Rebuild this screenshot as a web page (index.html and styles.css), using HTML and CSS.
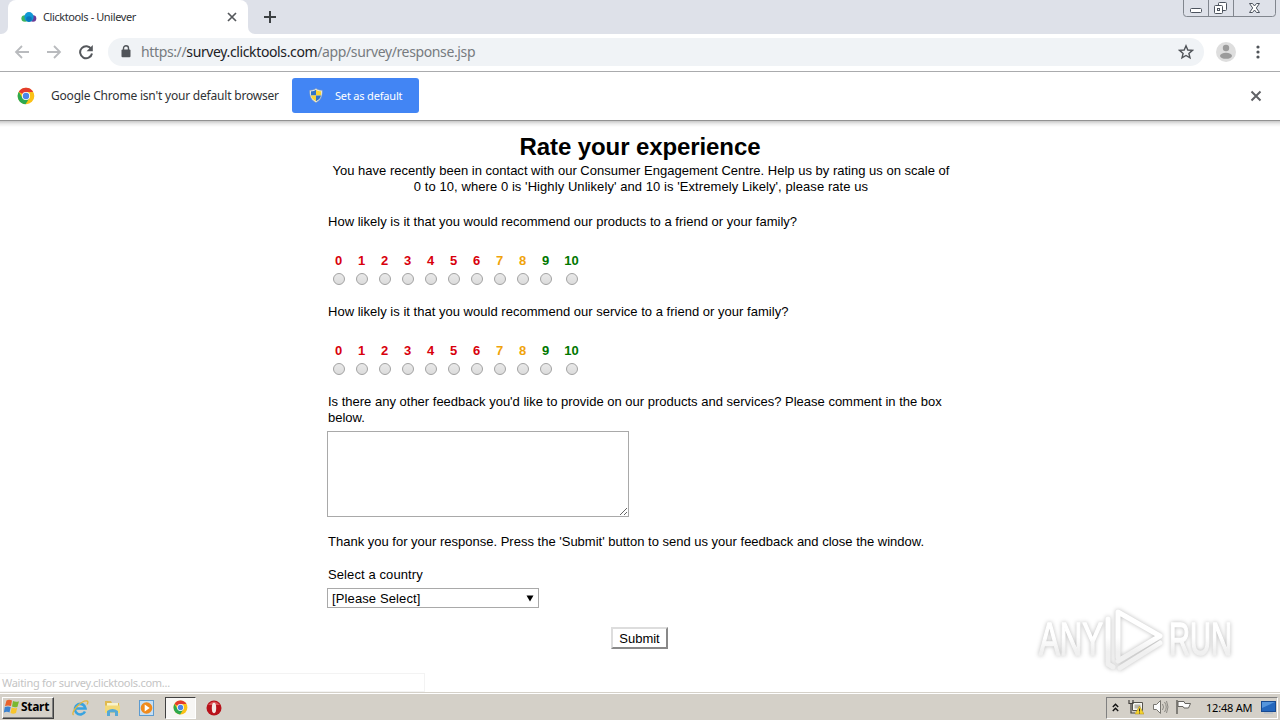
FILE: index.html
```
<!DOCTYPE html>
<html lang="en">
<head>
  <meta charset="UTF-8">
  <title>Clicktools - Unilever</title>
  <link rel="stylesheet" href="styles.css">
</head>
<body>
  <svg class="defs" width="0" height="0">
    <symbol id="chrome" viewBox="0 0 18 18">
      <circle cx="9" cy="9" r="8.3" fill="#fbc116"/>
      <path d="M9 9 1.8 4.8A8.3 8.3 0 0 1 16.2 4.9H9z" fill="#e33b2e"/>
      <path d="M1.8 4.8A8.3 8.3 0 0 0 8.5 17.3L12.5 11 9 9 5.5 11z" fill="#2da94f"/>
      <circle cx="9" cy="9" r="4.1" fill="#fff"/>
      <circle cx="9" cy="9" r="3.2" fill="#4a86e8"/>
    </symbol>
  </svg>

  <!-- tabs -->
  <div class="tab-strip">
    <div class="tab-before"></div>
    <div class="tab">
      <svg class="favicon" width="16" height="12" viewBox="0 0 16 12">
        <ellipse cx="4" cy="7.5" rx="3.6" ry="3.3" fill="#3fb55d"/>
        <ellipse cx="12" cy="7.5" rx="3.3" ry="3.3" fill="#6b3c97"/>
        <ellipse cx="8" cy="6" rx="4.6" ry="4.9" fill="#1097d5"/>
        <ellipse cx="8" cy="8" rx="2.8" ry="2.8" fill="#0878bd"/>
      </svg>
      <span class="tab-title">Clicktools - Unilever</span>
      <svg class="tab-close" width="10" height="10" viewBox="0 0 10 10"><path d="M1 1l8 8M9 1L1 9" stroke="#55585c" stroke-width="1.7"/></svg>
    </div>
    <div class="tab-after">
      <svg width="12" height="12" viewBox="0 0 12 12"><path d="M6 0v12M0 6h12" stroke="#3c4043" stroke-width="2"/></svg>
    </div>
    <div class="window-buttons">
      <svg width="94" height="18" viewBox="0 0 94 18" fill="none">
        <path d="M.5 0v13.500q0 3 3 3h86q3 0 3-3V0M25.500 0v16M50.500 0v16" stroke="#81868e"/>
        <rect x="7.500" y="8.500" width="11" height="4" rx="1" fill="#fff" stroke="#4c535e"/>
        <rect x="35.500" y="2.500" width="8" height="8" rx="1" fill="#fff" stroke="#4c535e"/>
        <rect x="31.500" y="5.500" width="8" height="8" rx="1" fill="#fff" stroke="#4c535e"/>
        <rect x="34.500" y="8.500" width="2" height="2" stroke="#4c535e"/>
        <path d="M66.500 3.500h3l2 2.500 2-2.500h3L73.300 8l3.200 4.500h-3l-2-2.500-2 2.500h-3L69.700 8z" fill="#fff" stroke="#4c535e"/>
      </svg>
    </div>
  </div>

  <!-- address bar -->
  <div class="toolbar">
    <svg class="nav back" width="16" height="16" viewBox="0 0 16 16"><path d="M15 8H2M8 2L2 8l6 6" fill="none" stroke="#b9bbbe" stroke-width="1.8"/></svg>
    <svg class="nav forward" width="16" height="16" viewBox="0 0 16 16"><path d="M1 8h13M8 2l6 6-6 6" fill="none" stroke="#b9bbbe" stroke-width="1.800"/></svg>
    <svg class="nav reload" width="16" height="16" viewBox="0 0 16 16"><path d="M13.300 5.200A6 6 0 1 0 14 9.500" fill="none" stroke="#55585c" stroke-width="2"/><path d="M14.800 1v6.200H8.600z" fill="#55585c"/></svg>
    <div class="omnibox">
      <svg width="10" height="13" viewBox="0 0 10 13"><rect x="0.500" y="4.500" width="9" height="7.800" rx="1" fill="#505459"/><path d="M2.500 5V3.200a2.500 2.500 0 0 1 5 0V5" fill="none" stroke="#505459" stroke-width="1.400"/></svg>
      <span class="url">https://<b>survey.clicktools.com</b>/app/survey/response.jsp</span>
      <svg class="star" width="16" height="16" viewBox="0 0 16 16"><path d="M8 1.800l1.800 4.200 4.600.4-3.500 3 1.100 4.500L8 11.500l-4 2.400 1.100-4.500-3.500-3 4.600-.4z" fill="none" stroke="#505459" stroke-width="1.400"/></svg>
    </div>
    <svg class="avatar" width="20" height="20" viewBox="0 0 20 20"><circle cx="10" cy="10" r="10" fill="#dedede"/><circle cx="10" cy="6" r="3.200" fill="#9b9b9b"/><ellipse cx="10" cy="13.800" rx="6" ry="3" fill="#9b9b9b"/></svg>
    <svg class="menu" width="4" height="14" viewBox="0 0 4 14" fill="#505459"><circle cx="2" cy="2" r="1.600"/><circle cx="2" cy="7" r="1.600"/><circle cx="2" cy="12" r="1.600"/></svg>
  </div>

  <div class="infobar">
    <svg class="chrome-logo" width="18" height="18"><use href="#chrome"/></svg>
    <span class="infobar-text">Google Chrome isn't your default browser</span>
    <div class="default-button">
      <svg width="14" height="15" viewBox="0 0 14 15">
        <path d="M7 .5C5 2 3 2.300.8 2.300c-.3 6 1.500 10 6.200 12.200 4.700-2.200 6.500-6.200 6.200-12.200C11 2.300 9 2 7 .5z" fill="#f3f3e8" stroke="#8f9eb0" stroke-width=".6"/>
        <path d="M7 1.800C5.300 3 3.700 3.300 2 3.300V7.500h5z" fill="#2f73c9"/><path d="M7 1.800c1.700 1.200 3.300 1.500 5 1.500V7.500H7z" fill="#f8d436"/>
        <path d="M2 7.500h5v5.800C4 11.800 2.400 10 2 7.500z" fill="#f8d436"/><path d="M12 7.500H7v5.800c3-1.500 4.600-3.300 5-5.800z" fill="#2f73c9"/>
      </svg>
      <span>Set as default</span>
    </div>
    <svg class="infobar-close" width="12" height="12" viewBox="0 0 12 12"><path d="M1.500 1.500l9 9M10.500 1.500l-9 9" stroke="#606266" stroke-width="2"/></svg>
  </div>

  <main class="page">
    <form class="survey">
      <h1>Rate your experience</h1>
      <p class="intro"><span class="intro-first">You have recently been in contact with our Consumer Engagement Centre. Help us by rating us on scale of</span><br><span class="intro-second">0 to 10, where 0 is 'Highly Unlikely' and 10 is 'Extremely Likely', please rate us</span></p>

      <p class="question rating">How likely is it that you would recommend our products to a friend or your family?</p>
      <div class="scores">
        <label class="low">0<input type="radio" name="products"></label>
        <label class="low">1<input type="radio" name="products"></label>
        <label class="low">2<input type="radio" name="products"></label>
        <label class="low">3<input type="radio" name="products"></label>
        <label class="low">4<input type="radio" name="products"></label>
        <label class="low">5<input type="radio" name="products"></label>
        <label class="low">6<input type="radio" name="products"></label>
        <label class="mid">7<input type="radio" name="products"></label>
        <label class="mid">8<input type="radio" name="products"></label>
        <label class="high">9<input type="radio" name="products"></label>
        <label class="high">10<input type="radio" name="products"></label>
      </div>

      <p class="question rating">How likely is it that you would recommend our service to a friend or your family?</p>
      <div class="scores">
        <label class="low">0<input type="radio" name="service"></label>
        <label class="low">1<input type="radio" name="service"></label>
        <label class="low">2<input type="radio" name="service"></label>
        <label class="low">3<input type="radio" name="service"></label>
        <label class="low">4<input type="radio" name="service"></label>
        <label class="low">5<input type="radio" name="service"></label>
        <label class="low">6<input type="radio" name="service"></label>
        <label class="mid">7<input type="radio" name="service"></label>
        <label class="mid">8<input type="radio" name="service"></label>
        <label class="high">9<input type="radio" name="service"></label>
        <label class="high">10<input type="radio" name="service"></label>
      </div>

      <p class="question feedback">Is there any other feedback you'd like to provide on our products and services? Please comment in the box<br>below.</p>
      <textarea class="comment"></textarea>
      <p class="question thanks">Thank you for your response. Press the 'Submit' button to send us your feedback and close the window.</p>
      <p class="question country-label">Select a country</p>
      <div class="country"><span>[Please Select]</span><svg width="8" height="7" viewBox="0 0 8 7"><path d="M.5.500h7L4 6.500z"/></svg></div>
      <button class="submit" type="button">Submit</button>
    </form>

    <div class="status">Waiting for survey.clicktools.com...</div>

    <svg class="watermark" width="240" height="76" viewBox="0 0 240 76">
      <defs>
        <linearGradient id="fade" gradientUnits="userSpaceOnUse" x1="0" y1="0" x2="0" y2="72">
          <stop offset=".45" stop-color="#fff"/>
          <stop offset=".65" stop-color="#f0f0f0"/>
        </linearGradient>
      </defs>
      <g class="mark-shape" stroke="url(#fade)" fill="url(#fade)">
        <text x="5" y="50" textLength="64" lengthAdjust="spacingAndGlyphs">ANY</text>
        <text x="135" y="50" textLength="63" lengthAdjust="spacingAndGlyphs">RUN</text>
        <path d="M84 52V7l42 24L84 56M74 14v45l5 3M126 38L86 63" fill="none"/>
      </g>
    </svg>
  </main>

  <div class="taskbar">
    <div class="start">
      <svg width="16" height="15" viewBox="0 0 16 15">
        <path d="M2.500 1.500Q5 0 8 1.500L7 7Q4 5.800 1 7z" fill="#e8622c"/><path d="M9 2q3 1.500 6 .2l-1.500 5.500Q11 9 8 7.500z" fill="#7ab82f"/>
        <path d="M.8 8Q4 7 6.700 8L5.500 13.500Q3 12-.2 13.500z" fill="#3b82d0"/><path d="M7.700 8.500q3 1.500 5.500.3L12 14Q9 15.300 6.500 14z" fill="#f8c52c"/>
      </svg>
      <span>Start</span>
    </div>
    <svg class="task ie" width="18" height="18" viewBox="0 0 18 18"><path d="M14 12.500A5.300 5.300 0 1 1 14.500 9.500H5" fill="none" stroke="#39a3e0" stroke-width="2.600"/><path d="M2.500 16C-1 13 11 1 16 2c1.500.3 1 2 0 3.500" fill="none" stroke="#e3b73c" stroke-width="1.300"/></svg>
    <svg class="task explorer" width="17" height="18" viewBox="0 0 17 18"><path d="M1 2h6l1 2h7v10H1z" fill="#e0b94e"/><path d="M3 4h11v4H3z" fill="#f9f3cb"/><path d="M1 6.500h15V14H1z" fill="#f3d977"/><path d="M3 17v-5q5.500-4 11 0v5h-3v-3.500H6V17z" fill="#55a9d6"/></svg>
    <svg class="task player" width="17" height="18" viewBox="0 0 17 18"><rect x="1.500" y="1.500" width="14" height="15" fill="#c7dff3" stroke="#5c9bd0"/><circle cx="8.500" cy="9" r="5.800" fill="#f08a1c"/><path d="M6.700 5.500v7l5-3.500z" fill="#fff"/></svg>
    <div class="task-active"><svg width="15" height="15"><use href="#chrome"/></svg></div>
    <svg class="task opera" width="16" height="16" viewBox="0 0 16 16"><circle cx="8" cy="8" r="7.500" fill="#b8121b"/><path d="M2 5Q8-2 14 5" fill="#dc5558"/><ellipse cx="8" cy="8" rx="2.200" ry="5.200" fill="#f4e9e5"/></svg>
    <div class="tray">
      <svg class="chevrons" width="7" height="9" viewBox="0 0 7 9"><path d="M.800 4L3.500 1.300 6.200 4M.8 8l2.700-2.700L6.200 8" fill="none" stroke="#111" stroke-width="1.400"/></svg>
      <svg class="network" width="16" height="16" viewBox="0 0 16 16"><path d="M4.500 3.500h10v8h-10z" fill="#f7f7f2" stroke="#55534d"/><path d="M6.500 5.500h6v4h-6z" fill="#b7b5ab"/><path d="M1 1v3.500h4V1M3 4.500V14h4" fill="none" stroke="#44423e" stroke-width="1.200"/><path d="M11.500 7L16 15H7z" fill="#f5d32d" stroke="#ad8a13" stroke-width=".5"/><path d="M11.500 9.500v3m0 1v1" stroke="#333"/></svg>
      <svg class="volume" width="17" height="16" viewBox="0 0 17 16"><path d="M1.500 5.500h3l4-4v13l-4-4h-3z" fill="#fbfbfb" stroke="#77756f"/><path d="M10.500 5q2 3 0 6M12.500 3q3.500 5 0 10M14.500 2q3 6 0 12" fill="none" stroke="#8b8983"/></svg>
      <svg class="flag" width="17" height="16" viewBox="0 0 17 16"><path d="M2 1v14" stroke="#66645f" stroke-width="1.500"/><path d="M3 2.500h6l1 2h5.500l-2 4.500H9L8 7.500H3z" fill="#fdfdfd" stroke="#66645f"/></svg>
      <span class="clock">12:48 AM</span>
      <svg class="desktop" width="15" height="14" viewBox="0 0 15 14"><rect x=".5" y="1.500" width="14" height="10" fill="#2467bd" stroke="#174a91"/><path d="M1 2h13L1 8z" fill="#5595dc"/><path d="M3 13h9" stroke="#a8b8cb"/></svg>
    </div>
  </div>
</body>
</html>
```
FILE: styles.css
```
* {
  box-sizing: border-box;
}

body {
  margin: 0;
  width: 1280px;
  height: 720px;
  overflow: hidden;
  display: flex;
  flex-direction: column;
  background: #fff;
  font-family: "Liberation Sans", Arial, sans-serif;
}

svg {
  display: block;
  flex: none;
}

.defs {
  position: absolute;
}

/* browser window */
.tab-strip,
.toolbar,
.infobar,
.status,
.taskbar {
  font-family: "Noto Sans", Tahoma, sans-serif;
  white-space: nowrap;
}

.tab-strip {
  height: 34px;
  flex: none;
  display: flex;
  background: #fff;
}

.tab-before {
  width: 8px;
  background: #dee1e9;
  border-bottom-right-radius: 7px;
}

.tab {
  width: 240px;
  display: flex;
  align-items: center;
  padding: 0 11px 0 13px;
  background: linear-gradient(#dee1e9 8px, #fff 8px);
  position: relative;
}

.tab::before {
  content: "";
  position: absolute;
  inset: 0;
  background: #fff;
  border-radius: 8px 8px 0 0;
}

.tab > * {
  position: relative;
}

.tab-title {
  margin-left: 6px;
  padding-bottom: 2px;
  font-size: 11px;
  letter-spacing: -0.4px;
  color: #303235;
}

.tab-close {
  margin-left: auto;
}

.tab-after {
  flex: 1;
  padding: 11px 0 0 16px;
  background: #dee1e9;
  border-bottom-left-radius: 7px;
}

.window-buttons {
  width: 97px;
  background: #dee1e9;
}

.toolbar {
  height: 38px;
  flex: none;
  display: flex;
  align-items: center;
  padding: 0 0 2px 14px;
  border-bottom: 1px solid #aaabad;
}

.nav {
  margin-right: 16px;
}

.reload {
  margin-right: 14px;
}

.omnibox {
  width: 1096px;
  height: 28px;
  display: flex;
  align-items: center;
  padding: 0 10px 0 13px;
  border-radius: 14px;
  background: #f0f3f6;
}

.url {
  margin-left: 10px;
  font-size: 14px;
  letter-spacing: -0.37px;
  color: #777b80;
}

.url b {
  font-weight: normal;
  color: #202124;
}

.star {
  margin-left: auto;
}

.avatar {
  margin-left: 12px;
}

.menu {
  margin-left: 20px;
}

.infobar {
  height: 49px;
  flex: none;
  display: flex;
  align-items: center;
  padding: 0 18px 1px 17px;
  border-bottom: 1px solid #929292;
}

.infobar-text {
  width: 241px;
  margin-left: 16px;
  font-size: 12px;
  letter-spacing: -0.2px;
  color: #303235;
}

.default-button {
  width: 127px;
  height: 35px;
  display: flex;
  align-items: center;
  gap: 12px;
  padding-left: 17px;
  border-radius: 3px;
  background: #4285f4;
  color: #fff;
  font-size: 11px;
  letter-spacing: -0.18px;
}

.infobar-close {
  margin-left: auto;
}

/* survey */
.page {
  flex: 1;
  min-height: 0;
  position: relative;
  background: linear-gradient(#c8c8c8, #ededed 3px, #fff 6px);
}

.survey {
  width: 626px;
  margin: 0 auto;
  padding-top: 12px;
  font-size: 13px;
  line-height: 16px;
}

h1 {
  margin: 0 0 2px;
  font-size: 24px;
  line-height: 28px;
  letter-spacing: -0.1px;
  text-align: center;
}

.survey p {
  margin: 0;
  white-space: nowrap;
}

.survey .intro {
  margin-bottom: 19px;
  padding-left: 2px;
  text-align: center;
}

.intro-first {
  letter-spacing: 0.01px;
}

.intro-second {
  letter-spacing: 0.07px;
}

.survey .question {
  padding-left: 1px;
}

.rating {
  letter-spacing: 0.02px;
}

.scores {
  display: grid;
  grid-template-columns: repeat(10, 23px) 29px;
  margin: 23px 0 19px;
  font-weight: bold;
}

.scores label {
  display: flex;
  flex-direction: column;
  align-items: center;
  gap: 4px;
}

.low { color: #d8000c; }
.mid { color: #f0a30a; }
.high { color: #007700; }

.scores input {
  appearance: none;
  width: 12px;
  height: 12px;
  margin: 0;
  border: 1px solid #a2a2a2;
  border-radius: 50%;
  background: linear-gradient(#e9e9e9, #dcdcdc);
}

.comment {
  display: block;
  width: 302px;
  height: 86px;
  margin: 5px 0 17px;
  border: 1px solid #a9a9a9;
}

.country {
  width: 212px;
  height: 20px;
  display: flex;
  align-items: center;
  justify-content: space-between;
  margin: 5px 0 19px;
  padding: 0 4px;
  border: 1px solid #a9a9a9;
  letter-spacing: 0.12px;
}

.country span {
  padding-top: 2px;
}

.survey .country-label {
  margin-top: 17px;
  letter-spacing: 0.1px;
}

.submit {
  display: block;
  width: 57px;
  height: 22px;
  margin: 0 0 0 284px;
  padding: 0;
  border: 2px outset #ddd;
  background: #fff;
  font: 13px "Liberation Sans", Arial, sans-serif;
}

.status {
  position: absolute;
  left: 0;
  bottom: 0;
  width: 425px;
  height: 19px;
  padding-left: 2px;
  border: 1px solid #f3f3f3;
  border-left: 0;
  color: #c4c4c4;
  font-size: 11px;
  line-height: 18px;
  letter-spacing: -0.28px;
}

.watermark {
  position: absolute;
  left: 1034px;
  top: 484px;
}

.mark-shape {
  stroke-width: 5;
  stroke-linecap: round;
  stroke-linejoin: round;
  filter: drop-shadow(0 0 2px #bbb);
}

.mark-shape text {
  font: 46px "Liberation Sans Narrow", "Liberation Sans", sans-serif;
  stroke-width: 1.5;
}

/* taskbar */
.taskbar {
  height: 28px;
  flex: none;
  display: flex;
  align-items: center;
  padding: 2px 2px 0;
  border-top: 1px solid #d5d1c9;
  box-shadow: inset 0 1px #fff;
  background: #d4d0c8;
}

.start {
  width: 52px;
  height: 22px;
  display: flex;
  align-items: center;
  gap: 1px;
  padding: 0 0 2px 1px;
  border: 1px solid;
  border-color: #fff #404040 #404040 #fff;
  box-shadow: inset -1px -1px #808080;
  font-size: 12px;
  font-weight: bold;
  letter-spacing: -0.3px;
}

.ie { margin-left: 17px; }
.explorer { margin-left: 15px; }
.player { margin-left: 17px; }

.task-active {
  width: 31px;
  height: 22px;
  display: flex;
  align-items: center;
  justify-content: center;
  margin-left: 10px;
  border: 1px solid;
  border-color: #404040 #fff #fff #404040;
  background: #f7f6f4;
}

.opera {
  margin-left: 10px;
}

.tray {
  width: 172px;
  height: 22px;
  display: flex;
  align-items: center;
  margin-left: auto;
  padding: 0 0 1px 5px;
  border: 1px solid;
  border-color: #808080 #fff #fff #808080;
}

.network { margin-left: 9px; }
.volume { margin-left: 8px; }
.flag { margin-left: 6px; }

.clock {
  width: 48px;
  margin-left: 14px;
  font-size: 11px;
  letter-spacing: -0.2px;
}

.desktop {
  margin-left: 7px;
}
```
